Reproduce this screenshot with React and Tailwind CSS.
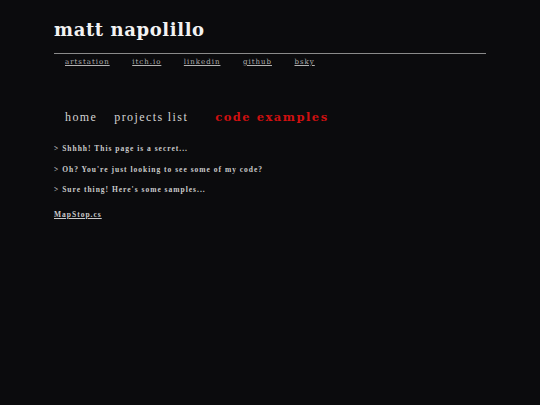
import React from "react";

const links = ["artstation", "itch.io", "linkedin", "github", "bsky"];

const lines = [
  "> Shhhh! This page is a secret...",
  "> Oh? You're just looking to see some of my code?",
  "> Sure thing! Here's some samples...",
];

const times = { fontFamily: '"Liberation Serif", "Times New Roman", serif' };

export default function App() {
  return (
    <div
      className="min-h-screen w-full bg-[#0b0b0d] text-[#d8d8d8]"
      style={{ fontFamily: '"DejaVu Serif", "Liberation Serif", serif' }}
    >
      <div className="mx-auto w-[432px] pt-[17px]">
        <h1 className="text-[18px] leading-[26px] font-bold tracking-[0.6px] text-[#f2f2f2]">
          matt napolillo
        </h1>

        <div className="mt-[10px] h-px bg-[#8a8a8a]" />

        <div className="flex gap-[22.5px] pl-[11px] pt-[3px] text-[7px] leading-[10px] tracking-[1px] text-[#b4b4b4]">
          {links.map((l) => (
            <a key={l} href="#" className="underline underline-offset-1">
              {l}
            </a>
          ))}
        </div>

        <nav
          className="mt-[42px] flex items-baseline pl-[11px] text-[12px] leading-[16px] tracking-[1.4px] text-[#d4d4d4]"
          style={times}
        >
          <span>home</span>
          <span className="ml-[17px]">projects list</span>
          <span
            className="ml-[27px] text-[11.5px] font-bold tracking-[1.5px] text-[#d01010]"
            style={{ fontFamily: '"DejaVu Serif", serif' }}
          >
            code examples
          </span>
        </nav>

        <div
          className="mt-[19px] flex flex-col gap-[10px] text-[7.5px] leading-[10.5px] font-bold tracking-[1px] text-[#cacaca]"
          style={times}
        >
          {lines.map((t) => (
            <p key={t}>{t}</p>
          ))}
        </div>

        <a
          href="#"
          className="mt-[14px] block text-[7.5px] leading-[10px] font-bold tracking-[1px] text-[#cacaca] underline underline-offset-1"
          style={times}
        >
          MapStop.cs
        </a>
      </div>
    </div>
  );
}
